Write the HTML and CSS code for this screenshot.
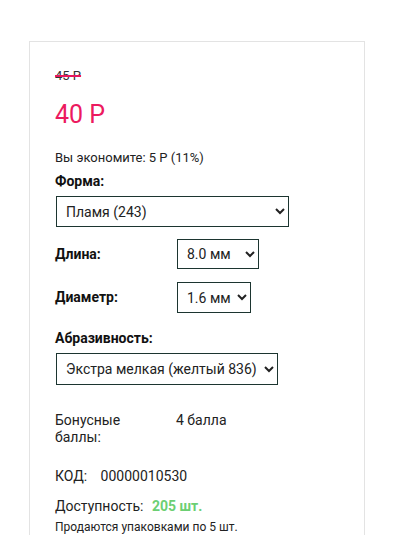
FILE: index.html
```html
<!DOCTYPE html>
<html lang="ru">
<head>
    <meta charset="UTF-8">
    <meta name="viewport" content="width=device-width, initial-scale=1.0">
    <title>Товар</title>
    <link rel="stylesheet" href="styles.css">
</head>
<body>
    <div class="card">
        <div class="old-price">45 Р</div>
        <div class="price">40 Р</div>
        <div class="saving">Вы экономите: 5 Р (11%)</div>

        <div class="label label-top">Форма:</div>
        <select class="field field-shape">
            <option>Пламя (243)</option>
        </select>

        <div class="row row-first">
            <div class="label label-side">Длина:</div>
            <select class="field field-length">
                <option>8.0 мм</option>
            </select>
        </div>

        <div class="row">
            <div class="label label-side">Диаметр:</div>
            <select class="field field-diam">
                <option>1.6 мм</option>
            </select>
        </div>

        <div class="label label-abr">Абразивность:</div>
        <select class="field field-abr">
            <option>Экстра мелкая (желтый 836)</option>
        </select>

        <div class="bonus">
            <div class="bonus-name">Бонусные баллы:</div>
            <div>4 балла</div>
        </div>

        <div class="code">
            <span class="code-name">КОД:</span>
            <span>00000010530</span>
        </div>

        <div class="stock">
            <span class="stock-name">Доступность:</span>
            <span class="stock-count">205 шт.</span>
        </div>
        <div class="pack">Продаются упаковками по 5 шт.</div>
    </div>
</body>
</html>
```

FILE: styles.css
```css
body {
    font-family: Roboto, "Liberation Sans", sans-serif;
    background: #fff;
    color: #222;
    margin: 0;
}
.card {
    margin: 41px 0 0 29px;
    width: 283px;
    height: 600px;
    border: 1px solid #e3e3e3;
    padding: 27px 26px 0 25px;
}
.old-price {
    font-size: 13px;
    line-height: 14px;
    color: #333;
    text-decoration: line-through;
    text-decoration-color: #e8175d;
    text-decoration-thickness: 2px;
}
.price {
    margin-top: 18px;
    font-size: 25px;
    line-height: 28px;
    color: #ec1a5f;
}
.saving {
    margin-top: 22px;
    font-size: 13px;
    line-height: 14px;
}
.label {
    font-size: 14px;
    line-height: 15px;
    font-weight: bold;
    color: #111;
}
.label-top {
    margin-top: 9px;
}
.field {
    display: block;
    font-family: Roboto, "Liberation Sans", sans-serif;
    font-size: 14px;
    color: #222;
    background: #fff;
    border: 1px solid #1c3530;
    border-radius: 0;
    padding: 0 2px 0 5px;
    box-sizing: border-box;
}
.field-shape {
    margin: 7px 0 0 1px;
    width: 233px;
    height: 31px;
}
.row {
    display: flex;
    align-items: center;
    margin-top: 13px;
}
.row-first {
    margin-top: 12px;
}
.label-side {
    width: 122px;
}
.field-length {
    width: 82px;
    height: 30px;
}
.field-diam {
    width: 74px;
    height: 31px;
}
.label-abr {
    margin-top: 18px;
}
.field-abr {
    margin: 7px 0 0 1px;
    width: 222px;
    height: 32px;
}
.bonus {
    display: grid;
    grid-template-columns: 121px auto;
    margin-top: 27px;
    font-size: 14px;
    line-height: 17px;
}
.bonus-name {
    padding-right: 40px;
}
.code {
    margin-top: 22px;
    font-size: 14px;
    line-height: 17px;
}
.code-name {
    margin-right: 10px;
}
.stock {
    margin-top: 13px;
    font-size: 14px;
    line-height: 17px;
}
.stock-name {
    margin-right: 5px;
}
.stock-count {
    color: #6ccf73;
    font-weight: bold;
}
.pack {
    margin-top: 5px;
    font-size: 12px;
    line-height: 14px;
}
```
